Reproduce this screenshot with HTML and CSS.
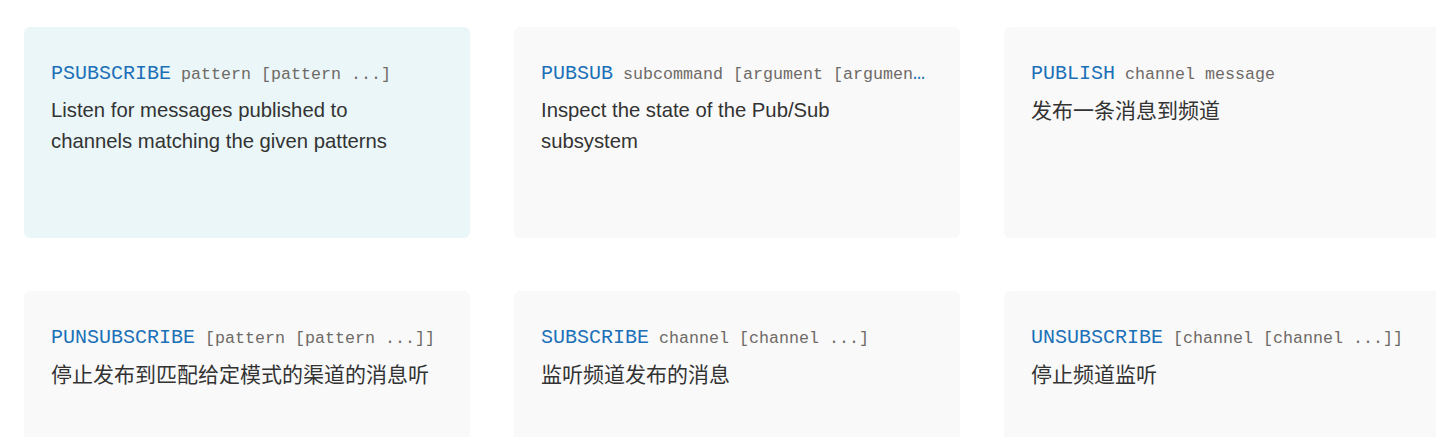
FILE: index.html
```html
<!DOCTYPE html>
<html lang="zh">
<head>
<meta charset="utf-8">
<link rel="stylesheet" href="styles.css">
</head>
<body>
<div class="grid">
  <div class="card active">
    <div class="cmd">PSUBSCRIBE<span class="args"> pattern [pattern ...]</span></div>
    <div class="desc">Listen for messages published to channels matching the given patterns</div>
  </div>
  <div class="card">
    <div class="cmd">PUBSUB<span class="args"> subcommand [argument [argument ...]]</span></div>
    <div class="desc">Inspect the state of the Pub/Sub subsystem</div>
  </div>
  <div class="card">
    <div class="cmd">PUBLISH<span class="args"> channel message</span></div>
    <div class="desc zh">发布一条消息到频道</div>
  </div>
  <div class="card">
    <div class="cmd">PUNSUBSCRIBE<span class="args"> [pattern [pattern ...]]</span></div>
    <div class="desc zh">停止发布到匹配给定模式的渠道的消息听</div>
  </div>
  <div class="card">
    <div class="cmd">SUBSCRIBE<span class="args"> channel [channel ...]</span></div>
    <div class="desc zh">监听频道发布的消息</div>
  </div>
  <div class="card">
    <div class="cmd">UNSUBSCRIBE<span class="args"> [channel [channel ...]]</span></div>
    <div class="desc zh">停止频道监听</div>
  </div>
</div>
</body>
</html>
```

FILE: styles.css
```css
html, body {
  margin: 0;
  padding: 0;
  background: #fff;
  overflow: hidden;
}
.grid {
  display: grid;
  grid-template-columns: repeat(3, 446px);
  column-gap: 44px;
  row-gap: 53px;
  padding: 27px 0 0 24px;
  width: max-content;
}
.card {
  box-sizing: border-box;
  height: 211px;
  padding: 32px 27px 20px 27px;
  background: #f9f9f9;
  border-radius: 6px;
}
.card.active {
  background: #eaf6f8;
}
.cmd {
  font-family: "Liberation Mono", "DejaVu Sans Mono", monospace;
  font-size: 20px;
  line-height: 30px;
  color: #1b70b8;
  white-space: nowrap;
  overflow: hidden;
  text-overflow: ellipsis;
}
.args {
  font-size: 16.67px;
  color: #6e6a66;
}
.desc {
  max-width: 381px;
  margin-top: 5px;
  font-family: "Liberation Sans", "Noto Sans CJK SC", sans-serif;
  font-size: 20.3px;
  line-height: 31px;
  color: #333;
}
.desc.zh {
  font-size: 21px;
}
```
